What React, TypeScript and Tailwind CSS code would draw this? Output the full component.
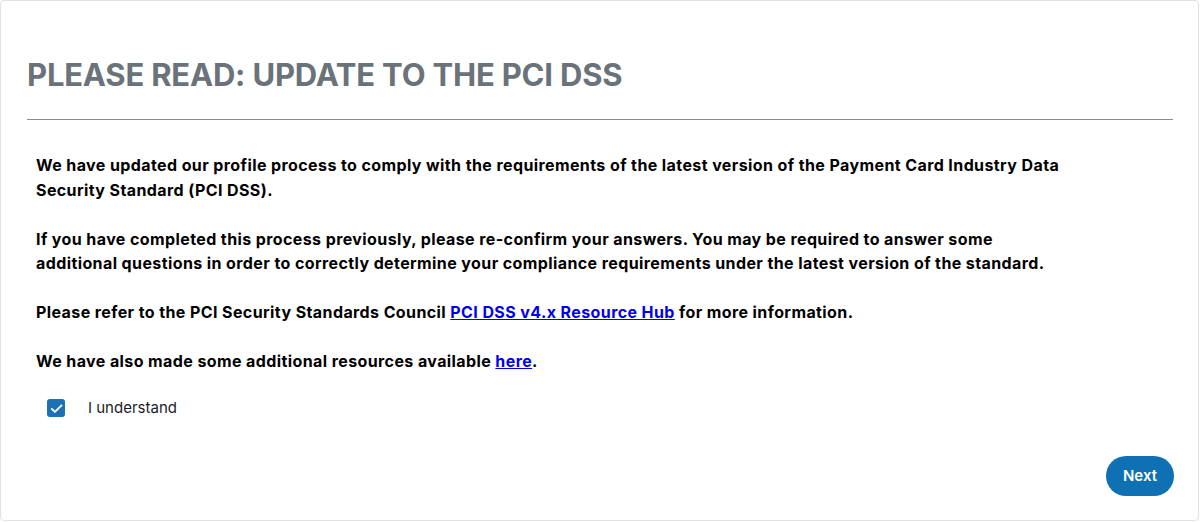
import React, { useState } from "react";

const App = () => {
  const [agreed, setAgreed] = useState(true);

  return (
    <div className="min-h-screen w-[1200px] bg-white" style={{ fontFamily: "Inter, 'Noto Sans', sans-serif" }}>
      <div className="h-[521px] w-[1199px] rounded border border-[#e2e2e2] bg-white flex flex-col">
        <div className="px-[26px] pt-[55px]">
          <h1 className="text-[31px] leading-[38px] font-bold text-[#6b737a] tracking-[-0.2px]">
            PLEASE READ: UPDATE TO THE PCI DSS
          </h1>
          <div className="mt-[25px] h-px bg-[#8a8a8a] w-[1146px]" />
        </div>

        <div className="px-[35px] pt-[33px] text-[16px] leading-[24.5px] font-bold text-black tracking-[0.4px]">
          <p>
            We have updated our profile process to comply with the requirements of the latest version of the Payment Card Industry Data
            <br />
            Security Standard (PCI DSS).
          </p>
          <p className="mt-[24.5px]">
            If you have completed this process previously, please re-confirm your answers. You may be required to answer some
            <br />
            additional questions in order to correctly determine your compliance requirements under the latest version of the standard.
          </p>
          <p className="mt-[24px]">
            Please refer to the PCI Security Standards Council{" "}
            <a href="#" className="text-[#0000ee] underline">
              PCI DSS v4.x Resource Hub
            </a>{" "}
            for more information.
          </p>
          <p className="mt-[24.5px]">
            We have also made some additional resources available{" "}
            <a href="#" className="text-[#0000ee] underline">
              here
            </a>
            .
          </p>
        </div>

        <label className="ml-[46px] mt-[24px] flex items-center gap-[23px] cursor-pointer w-fit">
          <span
            onClick={() => setAgreed(!agreed)}
            className={`flex h-[18px] w-[18px] items-center justify-center rounded-[3px] ${agreed ? "bg-[#1a72b4]" : "border border-gray-400 bg-white"}`}
          >
            {agreed && (
              <svg width="15" height="15" viewBox="0 0 24 24" fill="none" stroke="white" strokeWidth="3" strokeLinecap="round" strokeLinejoin="round">
                <path d="M4.5 12.5l5 5L20 7" />
              </svg>
            )}
          </span>
          <span className="text-[15px] text-[#1c1c28]">I understand</span>
        </label>

        <div className="mt-auto flex justify-end pr-[24px] pb-[24px]">
          <button className="h-[40px] w-[68px] rounded-full bg-[#0f71b3] text-[15px] font-semibold text-white">
            Next
          </button>
        </div>
      </div>
    </div>
  );
};

export default App;
